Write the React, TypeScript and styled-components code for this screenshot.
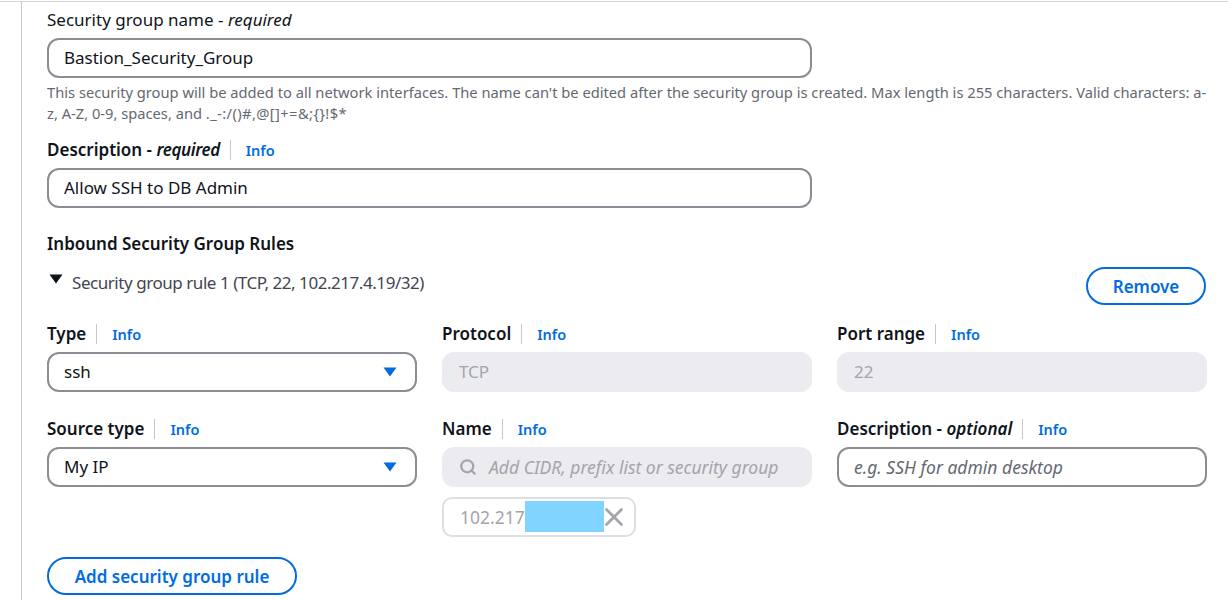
import React from "react";
import styled, { createGlobalStyle } from "styled-components";
import { FiSearch, FiX } from "react-icons/fi";

const GlobalStyle = createGlobalStyle`
  html, body {
    margin: 0;
    padding: 0;
    background: #fff;
  }
  body {
    font-family: "Noto Sans", "Open Sans", Arial, sans-serif;
    color: #0f141a;
  }
  * {
    box-sizing: border-box;
  }
`;

const Page = styled.div`
  width: 1228px;
  height: 599px;
  margin-top: 1px;
  overflow: hidden;
  border-top: 1px solid #d5d5d5;
  padding-left: 21px;
`;
const Panel = styled.div`
  height: 100%;
  border-left: 1px solid #c6c6cd;
  padding: 8px 21px 0 25px;
`;
const Label = styled.div`
  display: flex;
  align-items: center;
  height: 20px;
  font-size: 17px;
  line-height: 20px;
  font-weight: ${(props: { $strong?: boolean }) => (props.$strong ? 600 : 400)};
  em {
    font-style: italic;
  }
`;
const TightEm = styled.em`
  letter-spacing: -0.4px;
`;
const InfoLink = styled.a`
  margin-left: 10px;
  padding-left: 15px;
  border-left: 1px solid #c6c6cd;
  font-size: 14.5px;
  font-weight: 600;
  line-height: 20px;
  color: #006ce0;
`;
const TextField = styled.div<{ $disabled?: boolean; $width?: string }>`
  display: flex;
  align-items: center;
  width: ${(props) => props.$width || "100%"};
  height: 40px;
  margin-top: 8px;
  padding: 0 ${(props) => (props.$disabled ? 17 : 15)}px;
  border-radius: 12px;
  border: ${(props) => (props.$disabled ? "none" : "2px solid #8c8c94")};
  background: ${(props) => (props.$disabled ? "#ebebf0" : "#fff")};
  color: ${(props) => (props.$disabled ? "#a4a4ad" : "#0f141a")};
  font-size: 17px;
  line-height: 20px;
`;
const Placeholder = styled.span`
  font-size: 17.5px;
  font-style: italic;
  color: #656871;
`;
const MutedPlaceholder = styled(Placeholder)`
  color: #a4a4ad;
`;
const Hint = styled.p`
  margin: 4px 0 0;
  font-size: 14.7px;
  line-height: 21px;
  color: #656871;
`;
const HintSymbols = styled.span`
  letter-spacing: 0.4px;
`;
const Section = styled.div<{ $top: number }>`
  margin-top: ${(props) => props.$top}px;
`;
const Heading = styled.h3`
  margin: 0;
  font-size: 17px;
  line-height: 20px;
  font-weight: 600;
`;
const RuleRow = styled.div`
  display: flex;
  justify-content: space-between;
  height: 46px;
  margin-top: 13px;
  padding-right: 1px;
`;
const RuleTitle = styled.div`
  display: flex;
  align-items: center;
  height: 30px;
  font-size: 17px;
  color: #424650;
  letter-spacing: -0.45px;
`;
const RuleCaret = styled.svg`
  flex: none;
  width: 14px;
  height: 10px;
  margin: 0 9px 6px 2px;
`;
const SelectCaret = styled.svg`
  flex: none;
  width: 14px;
  height: 10px;
  margin-right: 3px;
`;
const Button = styled.button<{ $width: number }>`
  width: ${(props) => props.$width}px;
  height: 38px;
  padding: 0;
  border: 2px solid #006ce0;
  border-radius: 19px;
  background: #fff;
  color: #006ce0;
  font-family: inherit;
  font-size: 17px;
  font-weight: 600;
`;
const FieldGrid = styled.div`
  display: grid;
  grid-template-columns: repeat(3, 370px);
  column-gap: 25px;
  row-gap: 27px;
  margin-top: 11px;
`;
const SelectValue = styled.span`
  flex: 1;
`;
const SearchIcon = styled(FiSearch)`
  flex: none;
  margin-right: 12px;
  color: #a4a4ad;
  font-size: 18px;
  stroke-width: 3;
`;
const Chip = styled.div`
  display: flex;
  align-items: center;
  width: 194px;
  height: 40px;
  margin-top: 10px;
  padding-left: 16px;
  border: 2px solid #dedee3;
  border-radius: 10px;
  font-size: 17.5px;
  color: #a4a4ad;
`;
const Redaction = styled.span`
  flex: none;
  width: 79px;
  height: 31px;
  margin-bottom: 2px;
  background: #80d4ff;
`;
const ChipClose = styled(FiX)`
  flex: none;
  margin-left: -5px;
  color: #a4a4ad;
  font-size: 30px;
  stroke-width: 2.2;
`;
const AddRow = styled.div`
  margin-top: 20px;
`;

const CARET_PATH = "M0.5 0.5h13L7 9.5z";

function FieldLabel({ children }: { children: React.ReactNode }) {
  return (
    <Label $strong>
      <span>{children}</span>
      <InfoLink>Info</InfoLink>
    </Label>
  );
}

function Select({ value }: { value: string }) {
  return (
    <TextField>
      <SelectValue>{value}</SelectValue>
      <SelectCaret viewBox="0 0 14 10">
        <path d={CARET_PATH} fill="#006ce0" />
      </SelectCaret>
    </TextField>
  );
}

export default function App() {
  return (
    <Page>
      <GlobalStyle />
      <Panel>
        <Label>
          <span>
            Security group name - <em>required</em>
          </span>
        </Label>
        <TextField $width="765px">Bastion_Security_Group</TextField>
        <Hint>
          This security group will be added to all network interfaces. The name can't be edited after the security
          group is created. Max length is 255 characters. Valid characters: a-z, A-Z, 0-9, spaces, and{" "}
          <HintSymbols>{"._-:/()#,@[]+=&;{}!$*"}</HintSymbols>
        </Hint>
        <Section $top={16}>
          <FieldLabel>
            Description - <TightEm>required</TightEm>
          </FieldLabel>
          <TextField $width="765px">Allow SSH to DB Admin</TextField>
        </Section>
        <Section $top={26}>
          <Heading>Inbound Security Group Rules</Heading>
        </Section>
        <RuleRow>
          <RuleTitle>
            <RuleCaret viewBox="0 0 14 10">
              <path d={CARET_PATH} fill="#0f141a" />
            </RuleCaret>
            Security group rule 1 (TCP, 22, 102.217.4.19/32)
          </RuleTitle>
          <Button $width={120}>Remove</Button>
        </RuleRow>
        <FieldGrid>
          <div>
            <FieldLabel>Type</FieldLabel>
            <Select value="ssh" />
          </div>
          <div>
            <FieldLabel>Protocol</FieldLabel>
            <TextField $disabled>TCP</TextField>
          </div>
          <div>
            <FieldLabel>Port range</FieldLabel>
            <TextField $disabled>22</TextField>
          </div>
          <div>
            <FieldLabel>Source type</FieldLabel>
            <Select value="My IP" />
          </div>
          <div>
            <FieldLabel>Name</FieldLabel>
            <TextField $disabled>
              <SearchIcon />
              <MutedPlaceholder>Add CIDR, prefix list or security group</MutedPlaceholder>
            </TextField>
            <Chip>
              102.217
              <Redaction />
              <ChipClose />
            </Chip>
          </div>
          <div>
            <FieldLabel>
              Description - <em>optional</em>
            </FieldLabel>
            <TextField>
              <Placeholder>e.g. SSH for admin desktop</Placeholder>
            </TextField>
          </div>
        </FieldGrid>
        <AddRow>
          <Button $width={250}>Add security group rule</Button>
        </AddRow>
      </Panel>
    </Page>
  );
}
